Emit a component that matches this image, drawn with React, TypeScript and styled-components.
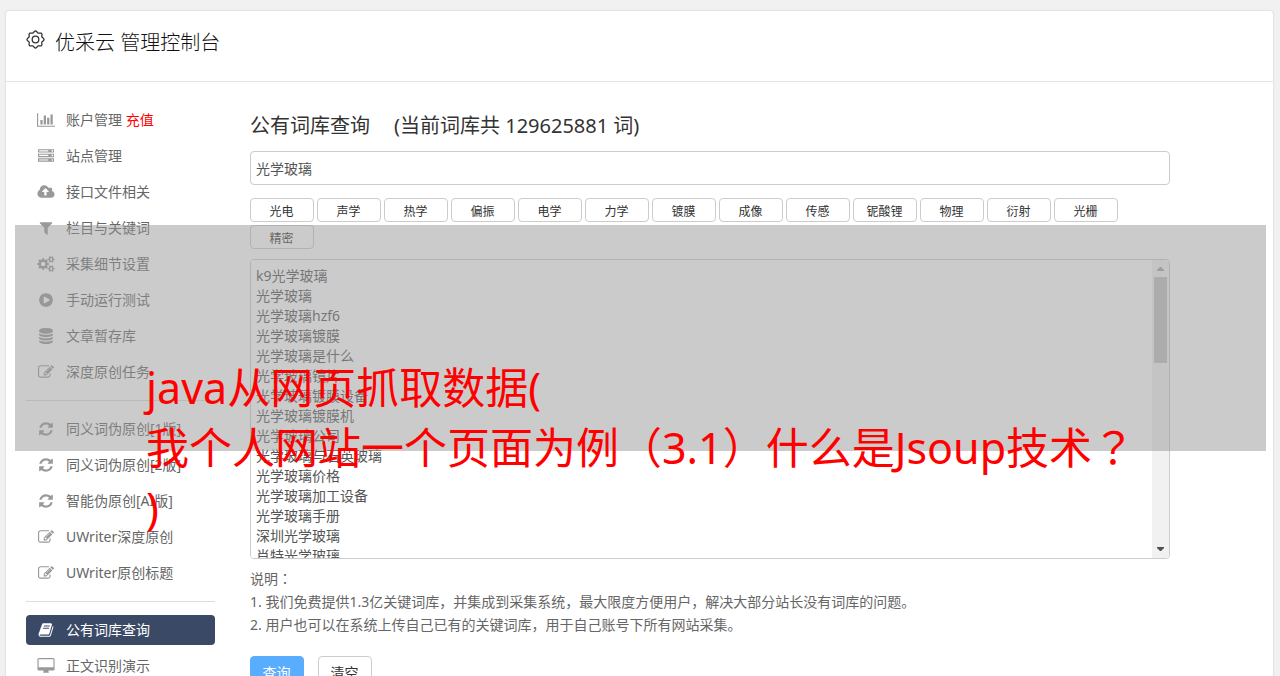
import React from "react";
import styled, { createGlobalStyle } from "styled-components";

const sans = '"Noto Sans", "Noto Sans CJK SC", sans-serif';

const GlobalStyle = createGlobalStyle`
  * { box-sizing: border-box; }
  html { scrollbar-width: none; }
  body {
    margin: 0;
    background: #f1f1f1;
    font: 14px/20px ${sans};
    color: #666;
  }
  button, input, textarea { font-family: inherit; }
`;

const Page = styled.div`
  position: relative;
  min-height: 100vh;
  padding: 10px 6px 0 5px;
`;

const Panel = styled.main`
  background: #fff;
  border: 1px solid #e4e4e4;
  border-radius: 4px;
  box-shadow: 0 0 1px rgba(0, 0, 0, 0.08);
  padding-bottom: 40px;
`;

const Header = styled.header`
  display: flex;
  align-items: flex-start;
  gap: 10px;
  height: 71px;
  padding: 18px 20px 0;
  border-bottom: 1px solid #e4e4e4;
  svg { margin-top: 1px; }
`;

const Title = styled.h1`
  margin: 0;
  font-size: 20px;
  line-height: 28px;
  font-weight: 300;
  color: #111;
`;

const Columns = styled.div`
  display: flex;
  gap: 35px;
  padding: 20px;
`;

const Sidebar = styled.nav`
  flex: none;
  width: 189px;
  padding-top: 3px;
`;

const Menu = styled.ul`
  list-style: none;
  margin: 0;
  padding: 0;
  display: grid;
  gap: 6px;
`;

const Rule = styled.hr`
  border: 0;
  border-top: 1px solid #ddd;
  margin: 13px 0;
`;

const MenuLink = styled.a<{ $active?: boolean }>`
  display: flex;
  align-items: center;
  height: 30px;
  padding: 0 10px;
  gap: 10px;
  border-radius: 4px;
  text-decoration: none;
  color: ${(p) => (p.$active ? "#fff" : "#666")};
  background: ${(p) => (p.$active ? "#3a4a66" : "transparent")};
  svg { color: ${(p) => (p.$active ? "#fff" : "#999")}; }
`;

const IconSlot = styled.span`
  display: flex;
  justify-content: center;
  width: 20px;
`;

const Recharge = styled.span`
  color: #f00;
`;

const Content = styled.section`
  flex: 1;
  min-width: 0;
  padding: 10px 83px 0 0;
`;

const Heading = styled.h2`
  display: flex;
  gap: 24px;
  margin: 0 0 11px;
  font-size: 20px;
  line-height: 28px;
  font-weight: 400;
  color: #333;
`;

const Keyword = styled.input`
  display: block;
  width: 100%;
  height: 34px;
  padding: 0 5px;
  border: 1px solid #ccc;
  border-radius: 4px;
  background: #fff;
  color: #555;
  font-size: 14px;
`;

const Tags = styled.div`
  display: flex;
  flex-wrap: wrap;
  gap: 3px;
  margin: 13px 0 10px;
`;

const Tag = styled.button`
  width: 64px;
  height: 24px;
  padding: 4px 1px 0 0;
  border: 1px solid #ccc;
  border-radius: 4px;
  background: #fff;
  color: #333;
  font-size: 12px;
  line-height: 18px;
`;

const ResultBox = styled.div`
  display: flex;
  height: 300px;
  border: 1px solid #ccc;
  border-radius: 4px;
  overflow: hidden;
`;

const Results = styled.textarea`
  flex: 1;
  min-width: 0;
  padding: 6px 5px;
  border: 0;
  resize: none;
  overflow: hidden;
  background: #fff;
  color: #555;
  font-size: 14px;
  line-height: 20px;
`;

const Scrollbar = styled.div`
  display: flex;
  flex-direction: column;
  align-items: center;
  width: 17px;
  background: #f1f1f1;
`;

const Arrow = styled.svg`
  flex: none;
  width: 17px;
  height: 17px;
`;

const Thumb = styled.div`
  width: 13px;
  height: 86px;
  margin-bottom: auto;
  background: #c1c1c1;
`;

const Notes = styled.div`
  margin-top: 8px;
  line-height: 23px;
  p { margin: 0; }
`;

const Centred = styled.span`
  font-family: "Noto Sans CJK TC", sans-serif;
  line-height: 0;
`;

const Actions = styled.div`
  display: flex;
  gap: 14px;
  margin-top: 20px;
`;

const Action = styled.button<{ $primary?: boolean }>`
  width: 54px;
  height: 34px;
  padding: 0 1px 0 0;
  border: 1px solid ${(p) => (p.$primary ? "#58adff" : "#ccc")};
  border-radius: 4px;
  background: ${(p) => (p.$primary ? "#58adff" : "#fff")};
  color: ${(p) => (p.$primary ? "#fff" : "#333")};
  font-size: 14px;
  line-height: 20px;
`;

const Shade = styled.div`
  position: absolute;
  top: 225px;
  left: 15px;
  right: 14px;
  height: 226px;
  background: rgba(151, 151, 151, 0.5);
  pointer-events: none;
`;

const Caption = styled.div`
  position: absolute;
  top: 358px;
  left: 146px;
  font-size: 43px;
  line-height: 60px;
  color: #f00;
  white-space: nowrap;
  pointer-events: none;
  p { margin: 0; }
`;

type Glyph = { w: number; d: string };

const glyphs: Record<string, Glyph> = {
  chart: { w: 2048, d: "M640 896v512h-256v-512h256zm384-512v1024h-256v-1024h256zm1024 1152v128h-2048v-1536h128v1408h1920zm-640-896v768h-256v-768h256zm384-384v1152h-256v-1152h256z" },
  server: { w: 1792, d: "M128 1408h1024v-128h-1024v128zm0-512h1024v-128h-1024v128zm1568 448q0-40-28-68t-68-28-68 28-28 68 28 68 68 28 68-28 28-68zm-1568-960h1024v-128h-1024v128zm1568 448q0-40-28-68t-68-28-68 28-28 68 28 68 68 28 68-28 28-68zm0-512q0-40-28-68t-68-28-68 28-28 68 28 68 68 28 68-28 28-68zm96 832v384h-1792v-384h1792zm0-512v384h-1792v-384h1792zm0-512v384h-1792v-384h1792z" },
  cloud: { w: 1920, d: "M1280 864q0-14-9-23l-352-352q-9-9-23-9t-23 9l-351 351q-10 12-10 24 0 14 9 23t23 9h224v352q0 13 9.5 22.5t22.5 9.5h192q13 0 22.5-9.5t9.5-22.5v-352h224q13 0 22.5-9.5t9.5-22.5zm640 288q0 159-112.5 271.5t-271.5 112.5h-1088q-185 0-316.5-131.5t-131.5-316.5q0-130 70-240t188-165q-2-30-2-43 0-212 150-362t362-150q156 0 285.5 87t188.5 231q71-62 166-62 106 0 181 75t75 181q0 76-41 138 130 31 213.5 135.5t83.5 238.5z" },
  filter: { w: 1792, d: "M1595 295q17 41-14 70l-493 493v742q0 42-39 59-13 5-25 5-27 0-45-19l-256-256q-19-19-19-45v-486l-493-493q-31-29-14-70 17-39 59-39h1280q42 0 59 39z" },
  cogs: { w: 1920, d: "M896 896q0-106-75-181t-181-75-181 75-75 181 75 181 181 75 181-75 75-181zm768 512q0-52-38-90t-90-38-90 38-38 90q0 53 37.5 90.5t90.5 37.5 90.5-37.5 37.5-90.5zm0-1024q0-52-38-90t-90-38-90 38-38 90q0 53 37.5 90.5t90.5 37.5 90.5-37.5 37.5-90.5zm-384 421v185q0 10-7 19.5t-16 10.5l-155 24q-11 35-32 76 34 48 90 115 7 11 7 20 0 12-7 19-23 30-82.5 89.5t-78.5 59.5q-11 0-21-7l-115-90q-37 19-77 31-11 108-23 155-7 24-30 24h-186q-11 0-20-7.5t-10-17.5l-23-153q-34-10-75-31l-118 89q-7 7-20 7-11 0-21-8-144-133-144-160 0-9 7-19 10-14 41-53t47-61q-23-44-35-82l-152-24q-10-1-17-9.5t-7-19.5v-185q0-10 7-19.5t16-10.5l155-24q11-35 32-76-34-48-90-115-7-11-7-20 0-12 7-20 22-30 82-89t79-59q11 0 21 7l115 90q34-18 77-32 11-108 23-154 7-24 30-24h186q11 0 20 7.5t10 17.5l23 153q34 10 75 31l118-89q8-7 20-7 11 0 21 8 144 133 144 160 0 8-7 19-12 16-42 54t-45 60q23 48 34 82l152 23q10 2 17 10.5t7 19.5zm640 533v140q0 16-149 31-12 27-30 52 51 113 51 138 0 4-4 7-122 71-124 71-8 0-46-47t-52-68q-20 2-30 2t-30-2q-14 21-52 68t-46 47q-2 0-124-71-4-3-4-7 0-25 51-138-18-25-30-52-149-15-149-31v-140q0-16 149-31 13-29 30-52-51-113-51-138 0-4 4-7 4-2 35-20t59-34 30-16q8 0 46 46.5t52 67.5q20-2 30-2t30 2q51-71 92-112l6-2q4 0 124 70 4 3 4 7 0 25-51 138 17 23 30 52 149 15 149 31zm0-1024v140q0 16-149 31-12 27-30 52 51 113 51 138 0 4-4 7-122 71-124 71-8 0-46-47t-52-68q-20 2-30 2t-30-2q-14 21-52 68t-46 47q-2 0-124-71-4-3-4-7 0-25 51-138-18-25-30-52-149-15-149-31v-140q0-16 149-31 13-29 30-52-51-113-51-138 0-4 4-7 4-2 35-20t59-34 30-16q8 0 46 46.5t52 67.5q20-2 30-2t30 2q51-71 92-112l6-2q4 0 124 70 4 3 4 7 0 25-51 138 17 23 30 52 149 15 149 31z" },
  play: { w: 1792, d: "M896 128q209 0 385.5 103t279.5 279.5 103 385.5-103 385.5-279.5 279.5-385.5 103-385.5-103-279.5-279.5-103-385.5 103-385.5 279.5-279.5 385.5-103zm384 823q32-18 32-55t-32-55l-544-320q-31-19-64-1-32 19-32 56v640q0 37 32 56 16 8 32 8 17 0 32-9z" },
  database: { w: 1792, d: "M896 768q237 0 443-43t325-127v170q0 69-103 128t-280 93.5-385 34.5-385-34.5-280-93.5-103-128v-170q119 84 325 127t443 43zm0 768q237 0 443-43t325-127v170q0 69-103 128t-280 93.5-385 34.5-385-34.5-280-93.5-103-128v-170q119 84 325 127t443 43zm0-384q237 0 443-43t325-127v170q0 69-103 128t-280 93.5-385 34.5-385-34.5-280-93.5-103-128v-170q119 84 325 127t443 43zm0-1152q208 0 385 34.5t280 93.5 103 128v128q0 69-103 128t-280 93.5-385 34.5-385-34.5-280-93.5-103-128v-128q0-69 103-128t280-93.5 385-34.5z" },
  edit: { w: 1792, d: "M888 1184l116-116-152-152-116 116v56h96v96h56zm440-720q-16-16-33 1l-350 350q-17 17-1 33t33-1l350-350q17-17 1-33zm80 594v190q0 119-84.5 203.5t-203.5 84.5h-832q-119 0-203.5-84.5t-84.5-203.5v-832q0-119 84.5-203.5t203.5-84.5h832q63 0 117 25 15 7 18 23 3 17-9 29l-49 49q-14 14-32 8-23-6-45-6h-832q-66 0-113 47t-47 113v832q0 66 47 113t113 47h832q66 0 113-47t47-113v-126q0-13 9-22l64-64q15-15 35-7t20 29zm-96-738l288 288-672 672h-288v-288zm444 132l-92 92-288-288 92-92q28-28 68-28t68 28l152 152q28 28 28 68t-28 68z" },
  refresh: { w: 1792, d: "M1639 1056q0 5-1 7-64 268-268 434.5t-478 166.5q-146 0-282.5-55t-243.5-157l-129 129q-19 19-45 19t-45-19-19-45v-448q0-26 19-45t45-19h448q26 0 45 19t19 45-19 45l-137 137q71 66 161 102t187 36q134 0 250-65t186-179q11-17 53-117 8-23 30-23h192q13 0 22.5 9.5t9.5 22.5zm25-800v448q0 26-19 45t-45 19h-448q-26 0-45-19t-19-45 19-45l138-138q-148-137-349-137-134 0-250 65t-186 179q-11 17-53 117-8 23-30 23h-199q-13 0-22.5-9.5t-9.5-22.5v-7q65-268 270-434.5t480-166.5q146 0 284 55.5t245 156.5l130-129q19-19 45-19t45 19 19 45z" },
  book: { w: 1792, d: "M1703 478q40 57 18 129l-275 906q-19 64-76.5 107.5t-122.5 43.5h-923q-77 0-148.5-53.5t-99.5-131.5q-24-67-2-127 0-4 3-27t4-37q1-8-3-21.5t-3-19.5q2-11 8-21t16.5-23.5 16.5-23.5q23-38 45-91.5t30-91.5q3-10 .5-30t-.5-28q3-11 17-28t17-23q21-36 42-92t25-90q1-9-2.5-32t.5-28q4-13 22-30.5t22-22.5q19-26 42.5-84.5t27.5-96.5q1-8-3-25.5t-2-26.5q2-8 9-18t18-23 17-21q8-12 16.5-30.5t15-35 16-36 19.5-32 26.5-23.5 36-11.5 47.5 5.5l-1 3q38-9 51-9h761q74 0 114 56t18 130l-274 906q-36 119-71.5 153.5t-128.5 34.5h-869q-27 0-38 15-11 16-1 43 24 70 144 70h923q29 0 56-15.5t35-41.5l300-987q7-22 5-57 38 15 59 43zm-1064 2q-4 13 2 22.5t20 9.5h608q13 0 25.5-9.5t16.5-22.5l21-64q4-13-2-22.5t-20-9.5h-608q-13 0-25.5 9.5t-16.5 22.5zm-83 256q-4 13 2 22.5t20 9.5h608q13 0 25.5-9.5t16.5-22.5l21-64q4-13-2-22.5t-20-9.5h-608q-13 0-25.5 9.5t-16.5 22.5z" },
  desktop: { w: 1920, d: "M1792 992v-832q0-13-9.5-22.5t-22.5-9.5h-1600q-13 0-22.5 9.5t-9.5 22.5v832q0 13 9.5 22.5t22.5 9.5h1600q13 0 22.5-9.5t9.5-22.5zm128-832v1088q0 66-47 113t-113 47h-544q0 37 16 77.5t32 71 16 43.5q0 26-19 45t-45 19h-512q-26 0-45-19t-19-45q0-14 16-44t32-70 16-78h-544q-66 0-113-47t-47-113v-1088q0-66 47-113t113-47h1600q66 0 113 47t47 113z" },
};

const Icon = ({ name }: { name: string }) => {
  const g = glyphs[name];
  return (
    <svg width={g.w > 1792 ? 18 : 16} height="16" viewBox={`0 0 ${g.w} 1792`} fill="currentColor" aria-hidden="true">
      <path d={g.d} />
    </svg>
  );
};

const GearIcon = () => {
  const points: string[] = [];
  for (let i = 0; i < 96; i++) {
    const a = (i / 96) * Math.PI * 2;
    const r = 7.7 + 0.8 * Math.cos(a * 8);
    points.push(`${(9.5 + r * Math.cos(a)).toFixed(2)} ${(9.5 + r * Math.sin(a)).toFixed(2)}`);
  }
  return (
    <svg width="19" height="19" viewBox="0 0 19 19" fill="none" stroke="#333" strokeWidth="1.3" aria-hidden="true">
      <path d={`M${points.join("L")}Z`} />
      <circle cx="9.5" cy="9.5" r="3.3" />
    </svg>
  );
};

// Colons and question marks are set centred in their em box.
const Prose = ({ children }: { children: string }) => (
  <p>
    {children.split(/([：？])/).map((part, i) =>
      i % 2 ? <Centred key={i} lang="zh-TW">{part}</Centred> : part
    )}
  </p>
);

type Item = { icon: string; label: string; extra?: string; active?: boolean };

const groups: Item[][] = [
  [
    { icon: "chart", label: "账户管理", extra: "充值" },
    { icon: "server", label: "站点管理" },
    { icon: "cloud", label: "接口文件相关" },
    { icon: "filter", label: "栏目与关键词" },
    { icon: "cogs", label: "采集细节设置" },
    { icon: "play", label: "手动运行测试" },
    { icon: "database", label: "文章暂存库" },
    { icon: "edit", label: "深度原创任务" },
  ],
  [
    { icon: "refresh", label: "同义词伪原创[1版]" },
    { icon: "refresh", label: "同义词伪原创[2版]" },
    { icon: "refresh", label: "智能伪原创[AI版]" },
    { icon: "edit", label: "UWriter深度原创" },
    { icon: "edit", label: "UWriter原创标题" },
  ],
  [
    { icon: "book", label: "公有词库查询", active: true },
    { icon: "desktop", label: "正文识别演示" },
  ],
];

const tags = ["光电", "声学", "热学", "偏振", "电学", "力学", "镀膜", "成像", "传感", "铌酸锂", "物理", "衍射", "光栅", "精密"];

const words = [
  "k9光学玻璃", "光学玻璃", "光学玻璃hzf6", "光学玻璃镀膜", "光学玻璃是什么", "光学玻璃镜片",
  "光学玻璃镀膜设备", "光学玻璃镀膜机", "光学玻璃公司", "光学玻璃与石英玻璃", "光学玻璃价格",
  "光学玻璃加工设备", "光学玻璃手册", "深圳光学玻璃", "肖特光学玻璃",
];

export default function App() {
  return (
    <Page lang="zh-CN">
      <GlobalStyle />
      <Panel>
        <Header>
          <GearIcon />
          <Title>优采云 管理控制台</Title>
        </Header>
        <Columns>
          <Sidebar>
            {groups.map((group, i) => (
              <React.Fragment key={i}>
                {i > 0 && <Rule />}
                <Menu>
                  {group.map((item) => (
                    <li key={item.label}>
                      <MenuLink href="#" $active={item.active}>
                        <IconSlot><Icon name={item.icon} /></IconSlot>
                        <span>
                          {item.label}
                          {item.extra && <Recharge> {item.extra}</Recharge>}
                        </span>
                      </MenuLink>
                    </li>
                  ))}
                </Menu>
              </React.Fragment>
            ))}
          </Sidebar>
          <Content>
            <Heading>
              <span>公有词库查询</span>
              <span>(当前词库共 129625881 词)</span>
            </Heading>
            <Keyword aria-label="关键词" defaultValue="光学玻璃" />
            <Tags>
              {tags.map((t) => <Tag key={t} type="button">{t}</Tag>)}
            </Tags>
            <ResultBox>
              <Results aria-label="查询结果" defaultValue={words.join("\n")} />
              <Scrollbar aria-hidden="true">
                <Arrow viewBox="0 0 17 17"><path d="M5 11h7v-1l-3-3h-1l-3 3z" fill="#a3a3a3" /></Arrow>
                <Thumb />
                <Arrow viewBox="0 0 17 17"><path d="M5 6h7v1l-3 3h-1l-3-3z" fill="#505050" /></Arrow>
              </Scrollbar>
            </ResultBox>
            <Notes>
              <Prose>说明：</Prose>
              <Prose>1. 我们免费提供1.3亿关键词库，并集成到采集系统，最大限度方便用户，解决大部分站长没有词库的问题。</Prose>
              <Prose>2. 用户也可以在系统上传自己已有的关键词库，用于自己账号下所有网站采集。</Prose>
            </Notes>
            <Actions>
              <Action type="button" $primary>查询</Action>
              <Action type="button">清空</Action>
            </Actions>
          </Content>
        </Columns>
      </Panel>
      <Shade />
      <Caption>
        <Prose>java从网页抓取数据(</Prose>
        <Prose>我个人网站一个页面为例（3.1）什么是Jsoup技术？</Prose>
        <Prose>)</Prose>
      </Caption>
    </Page>
  );
}
